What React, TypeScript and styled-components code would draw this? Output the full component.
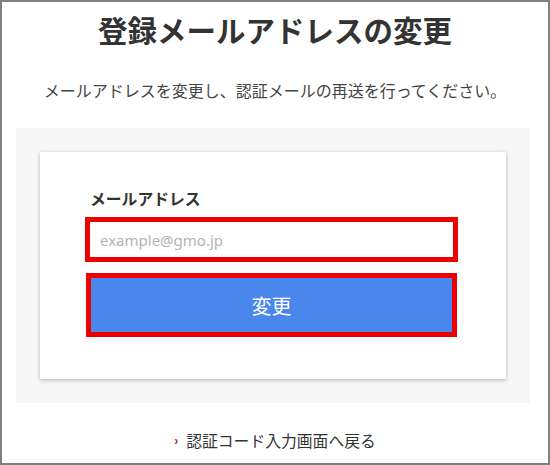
import styled, { createGlobalStyle } from 'styled-components';

const GlobalStyle = createGlobalStyle`
  html, body {
    margin: 0;
    padding: 0;
    background: #fff;
  }
  body {
    font-family: 'Noto Sans', 'Noto Sans CJK JP', sans-serif;
    color: #333;
  }
  * {
    box-sizing: border-box;
  }
`;

const Frame = styled.div`
  width: 550px;
  height: 465px;
  border: 2px solid #808080;
  background: #fff;
  display: flex;
  flex-direction: column;
  overflow: hidden;
`;

const Title = styled.h1`
  margin: 7px 0 0;
  font-family: 'Noto Sans CJK JP', sans-serif;
  font-size: 29.5px;
  line-height: 40px;
  font-weight: 700;
  text-align: center;
  color: #333;
`;

const Lead = styled.p`
  margin: 29px 0 0;
  font-family: 'Noto Sans CJK JP', sans-serif;
  font-size: 16px;
  line-height: 24px;
  text-align: center;
  color: #444;
`;

const Panel = styled.section`
  margin: 26px 18px 0 14px;
  padding: 24px;
  background: #f7f7f7;
`;

const Card = styled.div`
  background: #fff;
  padding: 36px 48px 42px 45px;
  box-shadow: 0 1px 4px rgba(0, 0, 0, 0.28);
  display: flex;
  flex-direction: column;
`;

const Label = styled.label`
  margin-left: 5px;
  font-family: 'Noto Sans CJK JP', sans-serif;
  font-size: 15.8px;
  line-height: 22px;
  font-weight: 700;
  color: #333;
`;

const Field = styled.div`
  margin-top: 7px;
  height: 45px;
  border: 5px solid #ee0000;
  background: #fff;
  display: flex;
  align-items: center;
`;

const Input = styled.input`
  width: 100%;
  height: 100%;
  border: none;
  outline: none;
  padding: 0 10px;
  background: transparent;
  font-family: 'Noto Sans', sans-serif;
  font-size: 15px;
  color: #333;
  &::placeholder {
    color: #b4b4b4;
  }
`;

const SubmitButton = styled.button`
  margin: 11px 1px 0 1px;
  height: 64px;
  border: 5px solid #ee0000;
  background: #4a87ec;
  color: #fff;
  font-family: 'Noto Sans CJK JP', sans-serif;
  font-size: 20px;
  cursor: pointer;
`;

const BackLink = styled.a`
  margin: 26px 0 0;
  align-self: center;
  display: flex;
  align-items: center;
  gap: 8px;
  font-family: 'Noto Sans CJK JP', sans-serif;
  font-size: 15.8px;
  line-height: 24px;
  color: #333;
  text-decoration: none;
`;

const Chevron = styled.span`
  color: #a8282e;
  font-size: 12px;
  font-weight: 700;
  font-family: 'Liberation Sans', sans-serif;
`;

export default function App() {
  return (
    <>
      <GlobalStyle />
      <Frame>
        <Title>登録メールアドレスの変更</Title>
        <Lead>メールアドレスを変更し、認証メールの再送を行ってください。</Lead>
        <Panel>
          <Card>
            <Label htmlFor='email'>メールアドレス</Label>
            <Field>
              <Input id='email' type='email' placeholder='example@gmo.jp' />
            </Field>
            <SubmitButton type='button'>変更</SubmitButton>
          </Card>
        </Panel>
        <BackLink href='#'>
          <Chevron>›</Chevron>
          認証コード入力画面へ戻る
        </BackLink>
      </Frame>
    </>
  );
}
